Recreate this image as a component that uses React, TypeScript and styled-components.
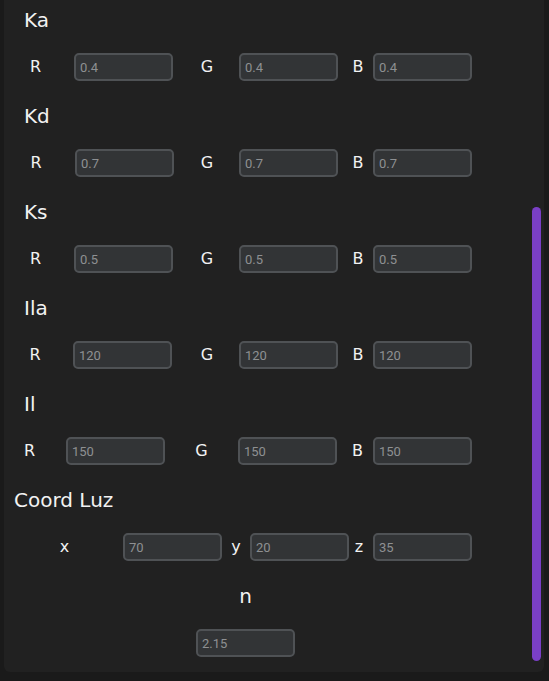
import React from "react";
import styled, { createGlobalStyle } from "styled-components";

const Global = createGlobalStyle`
  html, body {
    margin: 0;
    padding: 0;
    background: #1a1a1a;
    overflow: hidden;
  }
  body {
    font-family: "DejaVu Sans", sans-serif;
  }
`;

const PANEL_LEFT = 4;
const LABEL_W = 20;
const INPUT_W = 99;

const Panel = styled.div`
  position: relative;
  width: 540px;
  margin-left: ${PANEL_LEFT}px;
  box-sizing: border-box;
  padding: 8px 0 15px 0;
  background: #212121;
  border-radius: 0 0 6px 6px;
`;

const Section = styled.section`
  display: flex;
  flex-direction: column;
  margin-bottom: 23px;
`;

const Heading = styled.h2<{ $indent: number }>`
  margin: 0 0 21px ${(p) => p.$indent}px;
  font-family: "DejaVu Sans", sans-serif;
  font-weight: 400;
  font-size: 20px;
  line-height: 24px;
  color: #f2f2f2;
`;

const Row = styled.div`
  display: flex;
  align-items: center;
  height: 28px;
`;

const Label = styled.label<{ $ml: number }>`
  width: ${LABEL_W}px;
  margin-left: ${(p) => p.$ml}px;
  text-align: center;
  font-family: "DejaVu Sans", sans-serif;
  font-size: 16px;
  line-height: 20px;
  color: #f2f2f2;
  flex-shrink: 0;
`;

const Input = styled.input<{ $ml?: number }>`
  box-sizing: border-box;
  width: ${INPUT_W}px;
  height: 28px;
  margin: 0 0 0 ${(p) => p.$ml ?? 0}px;
  padding: 0 0 0 4px;
  border: 2px solid #4f5255;
  border-radius: 5px;
  background: #323436;
  color: #8e9092;
  font-family: Roboto, "Liberation Sans", sans-serif;
  font-size: 13px;
  outline: none;
  flex-shrink: 0;
`;

const Centered = styled.section`
  display: flex;
  flex-direction: column;
  align-items: center;
  width: ${INPUT_W}px;
  margin-left: 192px;
`;

const CenterHeading = styled.h2`
  margin: 0 0 21px 0;
  font-family: "DejaVu Sans", sans-serif;
  font-weight: 400;
  font-size: 20px;
  line-height: 24px;
  color: #f2f2f2;
`;

const Thumb = styled.div`
  position: absolute;
  right: 3px;
  top: 207px;
  bottom: 11px;
  width: 9px;
  border-radius: 5px;
  background: #7a3fc6;
`;

type Field = { label: string; value: string; lx: number; ix: number };
type Group = { title: string; indent: number; fields: Field[] };

const std = (v: string, first = 74): Field[] => [
  { label: "R", value: v, lx: 25.5, ix: first },
  { label: "G", value: v, lx: 197, ix: 239 },
  { label: "B", value: v, lx: 348, ix: 373 },
];

const groups: Group[] = [
  { title: "Ka", indent: 20, fields: std("0.4") },
  { title: "Kd", indent: 20, fields: [{ label: "R", value: "0.7", lx: 26, ix: 75 }, ...std("0.7").slice(1)] },
  { title: "Ks", indent: 20, fields: std("0.5") },
  { title: "Ila", indent: 20, fields: [{ label: "R", value: "120", lx: 25, ix: 73 }, ...std("120").slice(1)] },
  {
    title: "Il",
    indent: 20,
    fields: [
      { label: "R", value: "150", lx: 19.5, ix: 66 },
      { label: "G", value: "150", lx: 191.5, ix: 238 },
      { label: "B", value: "150", lx: 347.5, ix: 373 },
    ],
  },
  {
    title: "Coord Luz",
    indent: 10,
    fields: [
      { label: "x", value: "70", lx: 54.5, ix: 123 },
      { label: "y", value: "20", lx: 226, ix: 250 },
      { label: "z", value: "35", lx: 349, ix: 373 },
    ],
  },
];

function FieldRow({ fields }: { fields: Field[] }) {
  let prevEnd = PANEL_LEFT;
  return (
    <Row>
      {fields.map((f) => {
        const lm = f.lx - prevEnd;
        const im = f.ix - (f.lx + LABEL_W);
        prevEnd = f.ix + INPUT_W;
        return (
          <React.Fragment key={f.label}>
            <Label $ml={lm}>{f.label}</Label>
            <Input $ml={im} defaultValue={f.value} readOnly />
          </React.Fragment>
        );
      })}
    </Row>
  );
}

export default function App() {
  return (
    <>
      <Global />
      <Panel>
        {groups.map((g) => (
          <Section key={g.title}>
            <Heading $indent={g.indent}>{g.title}</Heading>
            <FieldRow fields={g.fields} />
          </Section>
        ))}
        <Centered>
          <CenterHeading>n</CenterHeading>
          <Input defaultValue="2.15" readOnly />
        </Centered>
        <Thumb />
      </Panel>
    </>
  );
}
